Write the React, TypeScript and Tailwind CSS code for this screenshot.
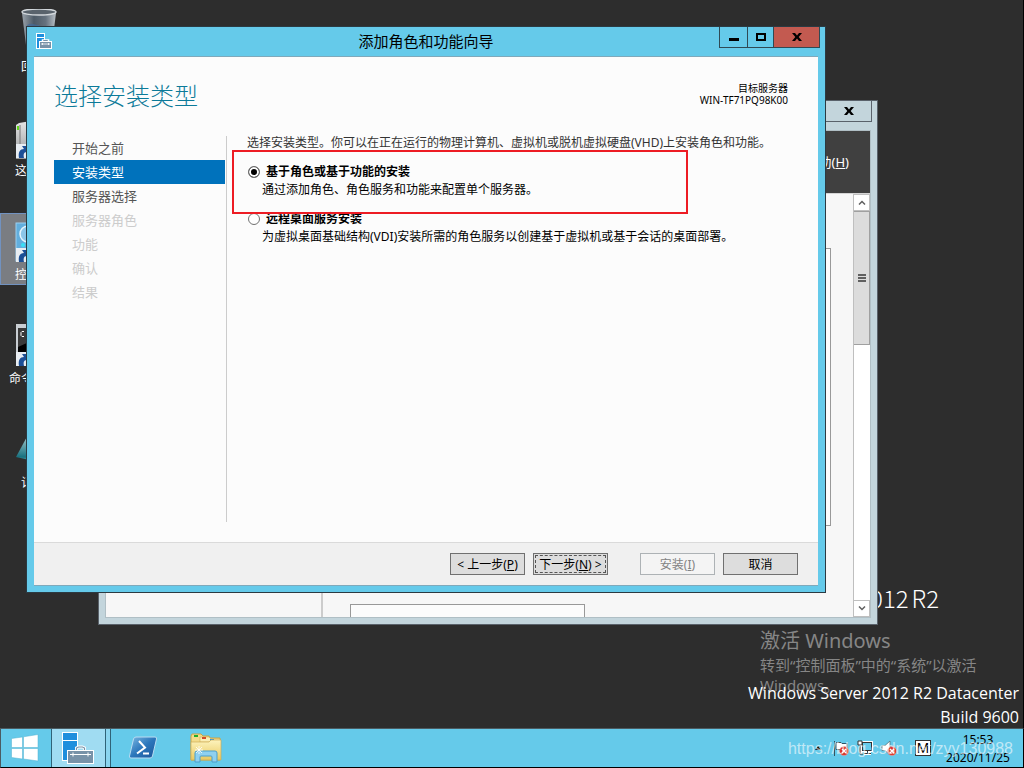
import type { ReactNode } from "react"

const uiFont = "font-['Noto_Sans','Noto_Sans_CJK_SC',sans-serif]"

const steps = [
  { label: "开始之前", state: "done" },
  { label: "安装类型", state: "current" },
  { label: "服务器选择", state: "done" },
  { label: "服务器角色", state: "disabled" },
  { label: "功能", state: "disabled" },
  { label: "确认", state: "disabled" },
  { label: "结果", state: "disabled" },
]

const stepStyles: Record<string, string> = {
  done: "text-[#555555]",
  current: "bg-[#0072bc] text-white",
  disabled: "text-[#cccccc]",
}

function ShortcutArrow() {
  return (
    <g>
      <rect x="1" y="31" width="14" height="14" fill="#e8edf2" />
      <path d="M4 45c-1-6 1-9 5-9l-2-3h8v8l-3-2c-3 0-4 2-3 6z" fill="#1c4f96" />
    </g>
  )
}

function RecycleBinIcon() {
  return (
    <svg viewBox="0 0 48 48" className="size-12">
      <defs>
        <linearGradient id="bin" x1="0" x2="1">
          <stop offset="0" stopColor="#9aa3ab" />
          <stop offset="0.35" stopColor="#4d5a66" />
          <stop offset="0.7" stopColor="#66727e" />
          <stop offset="1" stopColor="#b9c0c6" />
        </linearGradient>
      </defs>
      <path d="M7 4h34l-5 40H12z" fill="url(#bin)" />
      <path d="M12 16c5-3 8 0 12 0v12H14z" fill="#42699a" opacity="0.7" />
      <ellipse cx="24" cy="3" rx="17" ry="3" fill="#59636c" stroke="#d3d8dc" strokeWidth="1.4" />
    </svg>
  )
}

function ComputerIcon() {
  return (
    <svg viewBox="0 0 48 48" className="size-12">
      <defs>
        <linearGradient id="pc" x1="0" x2="0" y1="0" y2="1">
          <stop offset="0" stopColor="#e5e5e5" />
          <stop offset="1" stopColor="#96989a" />
        </linearGradient>
      </defs>
      <path d="M1 12l3-2 12-2v38H1z" fill="url(#pc)" />
      <path d="M5 12v30" stroke="#777" />
      <rect x="2" y="13" width="2" height="4" fill="#61d41b" />
      <ShortcutArrow />
    </svg>
  )
}

function ControlPanelIcon() {
  return (
    <svg viewBox="0 0 48 48" className="size-12">
      <rect x="1" y="6" width="46" height="38" fill="#62aedd" stroke="#9cd0ef" />
      <circle cx="13" cy="17" r="8" fill="#8cc6e8" stroke="#e6f5fc" strokeWidth="1.5" />
      <circle cx="8" cy="28" r="2" fill="#38e0f5" />
      <ShortcutArrow />
    </svg>
  )
}

function CommandPromptIcon() {
  return (
    <svg viewBox="0 0 48 48" className="size-12">
      <rect x="1" y="3" width="46" height="42" fill="#c9ced3" />
      <rect x="3" y="7" width="42" height="36" fill="#3a3a3a" />
      <path d="M3 26l42-19v36H3z" fill="#000" />
      <path d="M9 10.500h-2l-1 1v3l1 1h2" fill="none" stroke="#fff" />
      <ShortcutArrow />
    </svg>
  )
}

function NotesIcon() {
  return (
    <svg viewBox="0 0 48 48" className="size-12">
      <defs>
        <linearGradient id="note" x1="0" x2="0" y1="0" y2="1">
          <stop offset="0" stopColor="#b9d5d8" />
          <stop offset="0.8" stopColor="#17717f" />
          <stop offset="1" stopColor="#7fc0c9" />
        </linearGradient>
      </defs>
      <path d="M1 32L14 8l24 4-10 26z" fill="url(#note)" />
    </svg>
  )
}

const desktopIcons = [
  { label: "回收站", icon: <RecycleBinIcon /> },
  { label: "这台电脑", icon: <ComputerIcon /> },
  { label: "控制面板", icon: <ControlPanelIcon />, selected: true },
  { label: "命令提示符", icon: <CommandPromptIcon /> },
  { label: "记事本", icon: <NotesIcon /> },
]

function ServerManagerIcon({ className }: { className: string }) {
  return (
    <svg viewBox="0 0 32 32" className={className}>
      <rect x="0.500" y="0.500" width="15" height="28" fill="#1f8fdd" stroke="#fff" />
      <path d="M0 8.500h16" stroke="#fff" />
      <path d="M14.500 18v-2l2-1h4l2 1v2" fill="none" stroke="#fff" strokeWidth="3" />
      <path d="M14.500 18v-2l2-1h4l2 1v2" fill="none" stroke="#7892a8" strokeWidth="1.200" />
      <rect x="5.500" y="18.500" width="26" height="13" fill="#7892a8" stroke="#fff" />
      <path d="M8 22.500h21M11 20.500v4M26 20.500v4" stroke="#fff" />
    </svg>
  )
}

// 16px variant with heavier outlines for the title bar
function ServerManagerSmallIcon() {
  return (
    <svg viewBox="0 0 16 16" className="size-4">
      <rect x="0.500" y="0.500" width="8" height="15" fill="#1f8fdd" stroke="#fff" />
      <path d="M0 4.500h9" stroke="#fff" />
      <path d="M7 9V7.500h5V9" fill="none" stroke="#fff" strokeWidth="2.500" />
      <path d="M7.500 9V7.500h4V9" fill="none" stroke="#7892a8" />
      <rect x="3.500" y="8.500" width="12" height="7" fill="#7892a8" stroke="#fff" />
      <path d="M5 11h9M6.500 10v2M12.500 10v2" stroke="#fff" strokeWidth="0.800" />
    </svg>
  )
}

function CloseGlyph() {
  return (
    <svg viewBox="0 0 10 8" className="h-2 w-[10px]">
      <path d="M0 0h3l2 2.500L7 0h3L6.700 4 10 8H7L5 5.500 3 8H0l3.300-4z" fill="#000" />
    </svg>
  )
}

function ServerManagerWindow() {
  return (
    <section className="absolute left-[98px] top-[100px] flex h-[525px] w-[780px] flex-col border border-[#5a626b] bg-[#c3d5dc] px-[6px] pb-[6px]">
      <div className="-mr-px flex h-[29px] shrink-0 justify-end">
        <button aria-label="关闭" className="flex h-[21px] w-[47px] items-center justify-center border-x border-b border-[#5a626b]">
          <CloseGlyph />
        </button>
      </div>
      <div className="flex min-h-0 flex-1 flex-col border border-[#b0bfc5]">
        <div className="flex h-[62px] shrink-0 items-center justify-end bg-[#404040] pr-[21px] pt-[2px] text-[13px] text-white">
          <a href="#">帮助(<u>H</u>)</a>
        </div>
        <div className="flex min-h-0 flex-1 border-t border-[#d5d5d5] bg-[#f7f7f7]">
          <div className="w-[217px] border-r-2 border-[#cccccc]" />
          <div className="flex flex-1 flex-col pl-[27px] pr-[22px] pt-[54px]">
            <div className="h-[278px] shrink-0 border border-[#999999] bg-[#fcfcfc]" />
            <div className="mt-[78px] w-[235px] flex-1 border border-b-0 border-[#999999] bg-[#fcfcfc]" />
          </div>
          <div className="flex w-[17px] flex-col border-l border-[#bfbfbf] bg-white">
            <div className="flex h-[17px] items-center justify-center border-y border-r border-[#bfbfbf]">
              <svg viewBox="0 0 8 5" className="h-[5px] w-2">
                <path d="M1 4.500l3-3 3 3" fill="none" stroke="#606060" strokeWidth="1.500" />
              </svg>
            </div>
            <div className="flex h-[134px] flex-col items-center justify-center gap-px border border-l-0 border-[#a0a0a0] bg-[#dcdcdc]">
              <span className="h-[2px] w-2 bg-[#606060]" />
              <span className="h-[2px] w-2 bg-[#606060]" />
              <span className="h-[2px] w-2 bg-[#606060]" />
            </div>
            <div className="mt-auto flex h-[17px] items-center justify-center border-y border-r border-[#bfbfbf]">
              <svg viewBox="0 0 8 5" className="h-[5px] w-2">
                <path d="M1 0.500l3 3 3-3" fill="none" stroke="#606060" strokeWidth="1.500" />
              </svg>
            </div>
          </div>
        </div>
      </div>
    </section>
  )
}

function Option({ id, label, checked, children }: { id: string; label: string; checked?: boolean; children: string }) {
  return (
    <div className="relative ml-px">
      <div className="flex h-4 items-center gap-[6px]">
        <input
          type="radio"
          name="install-type"
          id={id}
          defaultChecked={checked}
          className="size-3 appearance-none rounded-full border border-[#707070] bg-white checked:bg-black checked:shadow-[inset_0_0_0_2px_white]"
        />
        <label htmlFor={id} className="font-bold">{label}</label>
      </div>
      <p className="pl-[14px] leading-5">{children}</p>
      {checked && (
        <div className="pointer-events-none absolute -left-4 -top-[14px] z-10 h-16 w-[456px] border-2 border-[#ed1c24]" />
      )}
    </div>
  )
}

function WizardButton({ children, className = "", disabled }: { children: ReactNode; className?: string; disabled?: boolean }) {
  return (
    <button
      disabled={disabled}
      className={`h-[22px] w-[75px] whitespace-nowrap border border-[#707070] bg-[#dddddd] pt-[2px] text-xs leading-[18px] disabled:border-[#adb2b5] disabled:bg-[#f4f4f4] disabled:text-[#838383] ${className}`}
    >
      {children}
    </button>
  )
}

function WizardWindow() {
  return (
    <section className="absolute left-[26px] top-[26px] flex h-[567px] w-[800px] flex-col border border-[#2b3a42] bg-[#65caea] px-[7px] pb-[6px]">
      <div className="relative flex h-[29px] shrink-0 items-center justify-between pb-[2px] pl-[2px]">
        <ServerManagerSmallIcon />
        <h2 className="absolute inset-x-0 text-center text-[15px] leading-5">添加角色和功能向导</h2>
        <div className="relative -mr-[2px] flex h-[21px] self-start border-x border-b border-[#2f4a55]">
          <button aria-label="最小化" className="flex w-7 items-end justify-center border-r border-[#2f4a55] pb-[6px]">
            <span className="h-[3px] w-[10px] bg-black" />
          </button>
          <button aria-label="最大化" className="flex w-[26px] items-center justify-center border-r border-[#2f4a55]">
            <span className="h-2 w-[10px] border-2 border-black" />
          </button>
          <button aria-label="关闭" className="flex w-[45px] items-center justify-center bg-[#c35a50]">
            <CloseGlyph />
          </button>
        </div>
      </div>
      <div className="flex min-h-0 flex-1 flex-col border border-x-0 border-[#7fa9bb] bg-[#fcfcfc]">
        <header className="flex justify-between pb-[26px] pl-5 pr-[30px] pt-[25px]">
          <h1 className="text-2xl font-light leading-7 text-[#0c7a99]">选择安装类型</h1>
          <div className="text-right text-[10px] leading-3 text-black">
            <p>目标服务器</p>
            <p>WIN-TF71PQ98K00</p>
          </div>
        </header>
        <div className="mb-5 flex flex-1">
          <nav className="w-[193px] border-r border-[#cccccc] pl-5 pr-px text-[13px]">
            {steps.map((step) => (
              <a key={step.label} href="#" className={`block pl-[18px] leading-6 ${stepStyles[step.state]}`}>
                {step.label}
              </a>
            ))}
          </nav>
          <div className="flex-1 pl-5 text-xs text-black">
            <p className="leading-[14px] text-[#333333]">
              选择安装类型。你可以在正在运行的物理计算机、虚拟机或脱机虚拟硬盘(VHD)上安装角色和功能。
            </p>
            <div className="flex flex-col gap-[11px] pt-[14px]">
              <Option id="role-based" label="基于角色或基于功能的安装" checked>
                通过添加角色、角色服务和功能来配置单个服务器。
              </Option>
              <Option id="rds" label="远程桌面服务安装">
                为虚拟桌面基础结构(VDI)安装所需的角色服务以创建基于虚拟机或基于会话的桌面部署。
              </Option>
            </div>
          </div>
        </div>
        <footer className="flex justify-end gap-2 border-t border-[#dadada] bg-[#f0f0f0] px-5 py-[10px]">
          <WizardButton>&lt; 上一步(<u>P</u>)</WizardButton>
          <WizardButton className="mr-6 outline-1 -outline-offset-3 outline-dashed outline-[#555555]">
            下一步(<u>N</u>) &gt;
          </WizardButton>
          <WizardButton disabled>安装(<u>I</u>)</WizardButton>
          <WizardButton>取消</WizardButton>
        </footer>
      </div>
    </section>
  )
}

function PowerShellIcon() {
  return (
    <svg viewBox="0 0 30 26" className="h-[26px] w-[30px]">
      <defs>
        <linearGradient id="ps" x1="0" x2="1" y1="0" y2="1">
          <stop offset="0" stopColor="#7db9e3" />
          <stop offset="0.5" stopColor="#2b76bb" />
          <stop offset="1" stopColor="#1c5598" />
        </linearGradient>
      </defs>
      <path d="M8 2h19q2 0 1.500 2l-4 17q-.5 2-2.500 2H3q-2 0-1.500-2l4-17Q6 2 8 2z" fill="url(#ps)" stroke="#b9dcf2" />
      <path d="M11 6l6 6.500L9 18.500" fill="none" stroke="#fff" strokeWidth="2" />
      <path d="M15 18.500h6" stroke="#fff" strokeWidth="2" />
    </svg>
  )
}

function ExplorerIcon() {
  return (
    <svg viewBox="0 0 32 30" className="h-[30px] w-8">
      <defs>
        <linearGradient id="folder" x1="0" x2="0" y1="0" y2="1">
          <stop offset="0" stopColor="#fdf3bd" />
          <stop offset="1" stopColor="#e9c95f" />
        </linearGradient>
      </defs>
      <path d="M1 27V3l1-2h9l2 2h6l1 2h10v22z" fill="#f3dc8b" stroke="#c9a548" />
      <rect x="4" y="2" width="4" height="2" fill="#1fae2c" />
      <path d="M10 9V4h9l2 2h9v3z" fill="#fbeeb5" stroke="#c9a548" strokeWidth="0.500" />
      <rect x="12" y="4" width="4" height="2" fill="#d34a2a" />
      <rect x="20" y="6" width="4" height="2" fill="#2596e8" />
      <path d="M1 9h18l2-2h10v20H1z" fill="url(#folder)" stroke="#cfae55" strokeWidth="0.700" />
      <path d="M5 29V20q0-2 2-2h18q2 0 2 2v9h-5v-5q0-1-1-1H11q-1 0-1 1v5z" fill="#8fd0ef" stroke="#4b9fcb" />
      <path d="M9 13v8M5 17h8M6 14l6 6M12 14l-6 6" stroke="#fff" strokeWidth="0.800" />
    </svg>
  )
}

function ErrorBadge() {
  return (
    <g>
      <circle cx="11" cy="11" r="4.500" fill="#d9352c" stroke="#f2b5b0" strokeWidth="0.500" />
      <path d="M9 9l4 4M13 9l-4 4" stroke="#fff" strokeWidth="1.400" />
    </g>
  )
}

function Taskbar() {
  return (
    <footer className="relative flex h-10 shrink-0 items-stretch border border-t-[#4b5b62] border-r-black border-b-black border-l-[#4b5b62] bg-[#65caea]">
      <button aria-label="开始" className="flex w-[51px] items-center justify-center border-r border-[#2f6378] pb-px pr-[2px]">
        <svg viewBox="0 0 28 28" className="size-7">
          <path
            d="M0.500 4.500L11.500 3v10.500h-11zM12.500 2.800L27 0.500v13H12.500zM0.500 14.500h11V25l-11-1.500zM12.500 14.500H27V27l-14.500-2z"
            fill="#fff"
            stroke="#4fb0d0"
            strokeWidth="0.500"
          />
        </svg>
      </button>
      <button aria-label="服务器管理器" className="flex w-[54px] items-center justify-center border-r border-[#2f6378] bg-[#a0dcf2] pr-px">
        <ServerManagerIcon className="size-8" />
      </button>
      <span className="w-[5px] border-r border-[#2f6378] bg-[#8ad5ef]" />
      <div className="flex items-center gap-8 pl-[17px]">
        <button aria-label="PowerShell"><PowerShellIcon /></button>
        <button aria-label="文件资源管理器"><ExplorerIcon /></button>
      </div>
      <div className="ml-auto flex items-center gap-2 pr-[9px]">
        <svg viewBox="0 0 6 4" className="mr-1 h-1 w-[6px]">
          <path d="M0 4l3-4 3 4z" fill="#111" />
        </svg>
        <svg viewBox="0 0 16 16" className="size-4">
          <path d="M1.500 1v15M3 2.500h5l1 1h5v7H9l-1-1H3z" fill="#fff" stroke="#33535f" />
          <ErrorBadge />
        </svg>
        <svg viewBox="0 0 16 16" className="size-4">
          <rect x="5.500" y="2.500" width="9" height="8" fill="#65caea" stroke="#fff" strokeWidth="3" />
          <rect x="5.500" y="2.500" width="9" height="8" fill="#65caea" stroke="#333" />
          <path d="M7 13.500h7M10.500 11v2" stroke="#fff" strokeWidth="3" />
          <path d="M7 13.500h7M10.500 11v2" stroke="#333" />
          <path d="M1 1h4v4H1zM3 5v9h3" fill="#fff" stroke="#333" />
        </svg>
        <svg viewBox="0 0 16 16" className="size-4">
          <path d="M1 5.500h3L9 1v14l-5-4.500H1z" fill="#fff" stroke="#53757f" strokeWidth="0.800" />
          <ErrorBadge />
        </svg>
        <span className="ml-[10px] mr-[3px] flex size-4 items-center justify-center border border-[#333333] bg-white font-['Liberation_Sans',sans-serif] text-[15px] text-black">
          M
        </span>
        <div className="w-[72px] pt-[2px] text-center text-xs leading-[18px] text-black">
          <p>15:53</p>
          <p>2020/11/25</p>
        </div>
      </div>
      <p className="pointer-events-none absolute right-[10px] top-[10px] font-['Liberation_Sans',sans-serif] text-base leading-5 text-white/60">
        https://blog.csdn.net/zyy130988
      </p>
    </footer>
  )
}

export default function App() {
  return (
    <div className={`flex h-screen flex-col overflow-hidden bg-[#2d2d2d] ${uiFont}`}>
      <main className="relative flex-1 overflow-hidden border-r border-black">
        <ul className="flex w-[78px] flex-col gap-8 pt-[5px]">
          {desktopIcons.map((item) => (
            <li
              key={item.label}
              className={`flex h-[72px] flex-col items-center border text-xs text-white ${
                item.selected ? "border-[#7192c0] bg-[#7a7d82]" : "border-transparent"
              }`}
            >
              <span className="pt-[3px]">{item.icon}</span>
              <span className="mt-[2px] whitespace-nowrap leading-4">{item.label}</span>
            </li>
          ))}
        </ul>
        <p className="absolute bottom-[114px] right-[84px] flex gap-[3px] whitespace-nowrap font-['Noto_Sans_CJK_SC',sans-serif] text-2xl leading-8 font-light text-white">
          <span>Windows Server 2012</span>
          <span>R2</span>
        </p>
        <div className="absolute bottom-[33px] right-[13px] w-[250px] text-[#868686]">
          <p className="text-xl leading-7">激活 Windows</p>
          <p className="text-[15px] leading-5">转到“控制面板”中的“系统”以激活 Windows。</p>
        </div>
        <div className="absolute -bottom-px right-1 whitespace-nowrap text-right font-['Open_Sans',sans-serif] text-base leading-6 text-white">
          <p>Windows Server 2012 R2 Datacenter</p>
          <p>Build 9600</p>
        </div>
        <ServerManagerWindow />
        <WizardWindow />
      </main>
      <Taskbar />
    </div>
  )
}
